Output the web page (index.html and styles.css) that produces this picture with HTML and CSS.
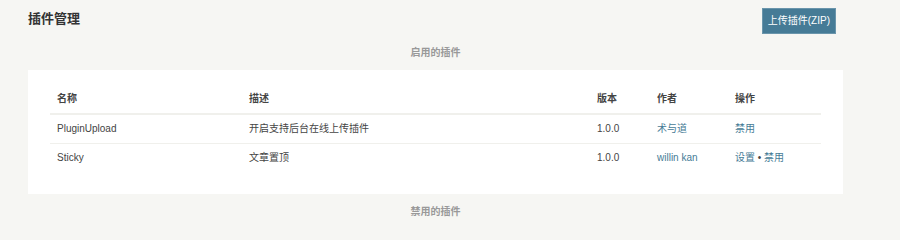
FILE: index.html
```html
<!DOCTYPE html>
<html lang="zh-CN">
<head>
<meta charset="utf-8">
<title>插件管理</title>
<link rel="stylesheet" href="styles.css">
</head>
<body>
<div class="page">
  <div class="page-head">
    <h2 class="page-title">插件管理</h2>
    <a class="btn-primary" href="#">上传插件(ZIP)</a>
  </div>
  <h4 class="list-title">启用的插件</h4>
  <div class="panel">
    <table class="list-table">
      <colgroup>
        <col class="c-name">
        <col class="c-desc">
        <col class="c-ver">
        <col class="c-author">
        <col class="c-ops">
      </colgroup>
      <thead>
        <tr>
          <th>名称</th>
          <th>描述</th>
          <th>版本</th>
          <th>作者</th>
          <th>操作</th>
        </tr>
      </thead>
      <tbody>
        <tr>
          <td>PluginUpload</td>
          <td>开启支持后台在线上传插件</td>
          <td>1.0.0</td>
          <td><a href="#">术与道</a></td>
          <td><a href="#">禁用</a></td>
        </tr>
        <tr class="last">
          <td>Sticky</td>
          <td>文章置顶</td>
          <td>1.0.0</td>
          <td><a href="#">willin kan</a></td>
          <td><a href="#">设置</a> &bull; <a href="#">禁用</a></td>
        </tr>
      </tbody>
    </table>
  </div>
  <h4 class="list-title list-title-bottom">禁用的插件</h4>
</div>
</body>
</html>
```

FILE: styles.css
```css
html, body {
  margin: 0;
  padding: 0;
  background: #f6f6f3;
}
body {
  font-family: "Liberation Sans", "Noto Sans CJK SC", sans-serif;
  font-size: 10px;
  color: #444;
}
a {
  color: #467b96;
  text-decoration: none;
}
.page {
  width: 815px;
  margin-left: 28px;
}
.page-head {
  display: flex;
  justify-content: space-between;
  align-items: flex-start;
  height: 38px;
  padding-right: 7px;
}
.page-title {
  margin: 0;
  padding-top: 11px;
  font-size: 13px;
  line-height: 16px;
  font-weight: bold;
  color: #333;
}
.btn-primary {
  margin-top: 8px;
  height: 26px;
  box-sizing: border-box;
  padding: 0 5px;
  display: flex;
  align-items: center;
  background: #467b96;
  color: #fff;
  font-size: 10px;
  line-height: 14px;
  border: 1px solid #6a95ab;
}
.list-title {
  margin: 8px 0 10px;
  text-align: center;
  color: #999;
  font-size: 10px;
  line-height: 14px;
  font-weight: bold;
}
.list-title-bottom {
  margin-top: 11px;
}
.panel {
  background: #fff;
  padding: 15px 22px 22px;
}
.list-table {
  width: 771px;
  border-collapse: collapse;
  table-layout: fixed;
}
.c-name { width: 192px; }
.c-desc { width: 348px; }
.c-ver { width: 60px; }
.c-author { width: 78px; }
.c-ops { width: 93px; }
.list-table th {
  height: 28px;
  padding: 0 7px;
  text-align: left;
  font-weight: bold;
  color: #444;
  line-height: 14px;
  border-bottom: 2px solid #f0f0ec;
  vertical-align: middle;
}
.list-table td {
  height: 28px;
  padding: 0 7px;
  line-height: 14px;
  border-bottom: 1px solid #f0f0ec;
  vertical-align: middle;
  white-space: nowrap;
}
.list-table tr.last td {
  border-bottom: none;
}
```
